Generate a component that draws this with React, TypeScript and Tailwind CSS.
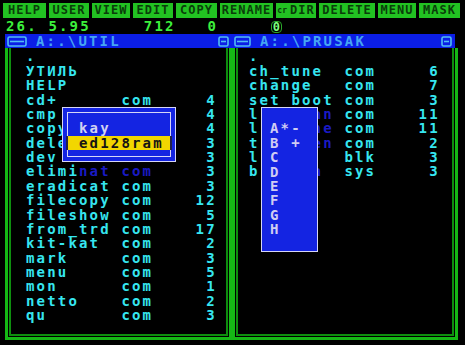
import React from "react";

type Entry = {
  name: string;
  ext?: string;
  size?: string;
  shade?: [number, number];
  hide?: [number, number];
};

// hide = columns that sit fully under a popup, shade = columns under its shadow
const leftFiles: Entry[] = [
  { name: "." },
  { name: "УТИЛЬ" },
  { name: "HELP" },
  { name: "cd+", ext: "com", size: "4" },
  { name: "cmp", ext: "com", size: "4", hide: [4, 14] },
  { name: "copy", ext: "com", size: "4", hide: [4, 14] },
  { name: "delete", ext: "com", size: "3", hide: [4, 14] },
  { name: "dev", ext: "com", size: "3", hide: [4, 14] },
  { name: "eliminat", ext: "com", size: "3", shade: [5, 15] },
  { name: "eradicat", ext: "com", size: "3" },
  { name: "filecopy", ext: "com", size: "12" },
  { name: "fileshow", ext: "com", size: "5" },
  { name: "from_trd", ext: "com", size: "17" },
  { name: "kit-kat", ext: "com", size: "2" },
  { name: "mark", ext: "com", size: "3" },
  { name: "menu", ext: "com", size: "5" },
  { name: "mon", ext: "com", size: "1" },
  { name: "netto", ext: "com", size: "2" },
  { name: "qu", ext: "com", size: "3" },
];

const rightFiles: Entry[] = [
  { name: "." },
  { name: "ch_tune", ext: "com", size: "6" },
  { name: "change", ext: "com", size: "7" },
  { name: "set_boot", ext: "com", size: "3" },
  { name: "lifescan", ext: "com", size: "11", shade: [6, 8], hide: [1, 6] },
  { name: "linetune", ext: "com", size: "11", shade: [6, 8], hide: [1, 6] },
  { name: "t_screen", ext: "com", size: "2", shade: [6, 8], hide: [1, 6] },
  { name: "logo", ext: "blk", size: "3", hide: [1, 6] },
  { name: "basicua", ext: "sys", size: "3", shade: [6, 8], hide: [1, 6] },
];

const buttons = [
  { label: "HELP", w: "w-[43px]" },
  { label: "USER", w: "w-[40px]" },
  { label: "VIEW", w: "w-[38px]" },
  { label: "EDIT", w: "w-[40px]" },
  { label: "COPY", w: "w-[41px]" },
  { label: "RENAME", w: "w-[53px]" },
  { label: "DIR", w: "w-[40px]", small: "cr" },
  { label: "DELETE", w: "w-[56px]" },
  { label: "MENU", w: "w-[38px]" },
  { label: "MASK", w: "w-[41px]" },
];

const drives = ["A*-", "B +", "C", "D", "E", "F", "G", "H"];

const fmt = (e: Entry) =>
  e.ext ? e.name.padEnd(9) + e.ext.padEnd(3) + (e.size ?? "").padStart(6) : e.name;

function FileRow({ entry }: { entry: Entry }) {
  let text = fmt(entry);
  if (entry.hide) {
    const [h1, h2] = entry.hide;
    text = text.slice(0, h1) + " ".repeat(h2 - h1) + text.slice(h2);
  }
  if (!entry.shade) {
    return <div className="h-[14.375px] leading-[14.375px] whitespace-pre">{text}</div>;
  }
  const [a, b] = entry.shade;
  return (
    <div className="h-[14.375px] leading-[14.375px] whitespace-pre">
      {text.slice(0, a)}
      <span className="text-[#1a1ac4]">{text.slice(a, b)}</span>
      {text.slice(b)}
    </div>
  );
}

function BarIcon({ w }: { w: number }) {
  return (
    <svg width={w} height="11" viewBox={`0 0 ${w} 11`}>
      <rect x="1" y="1" width={w - 2} height="9" rx="1.5" fill="none" stroke="#52bdf2" strokeWidth="1.6" />
      <line x1="3" x2={w - 3} y1="5.5" y2="5.5" stroke="#52bdf2" strokeWidth="1.6" />
    </svg>
  );
}

function Panel({
  title,
  files,
  width,
  leftIcon,
  textPad,
  barRight,
}: {
  title: string;
  files: Entry[];
  width: string;
  leftIcon: number;
  textPad: string;
  barRight: string;
}) {
  return (
    <div className={`${width} flex flex-col`}>
      {/* title bar */}
      <div className={`h-[14px] bg-[#0b1ee6] flex items-center pl-[2px] pr-[3px] ${barRight}`}>
        <BarIcon w={leftIcon} />
        <span className="ml-[9px] text-[#46a6f2] leading-[14px] whitespace-pre">{title}</span>
        <span className="ml-auto">
          <BarIcon w={11} />
        </span>
      </div>
      {/* frame */}
      <div className="flex-1 border-l-[3px] border-r-[3px] border-b-[3px] border-[#15b815] pl-[1px] pr-[1px] pb-[1px]">
        <div className={`h-full border-l-2 border-r-2 border-b-2 border-[#0e8f0e] pt-[1.4px] ${textPad} text-[#36e6f0]`}>
          {files.map((f, i) => (
            <FileRow key={i} entry={f} />
          ))}
        </div>
      </div>
    </div>
  );
}

export default function App() {
  return (
    <div className="relative w-[465px] h-[345px] bg-black overflow-hidden font-['DejaVu_Sans_Mono',monospace] font-bold text-[14px] tracking-[2.17px]">
      {/* function keys */}
      <div className="h-[19px] pt-[3px] pl-[3px] flex gap-[3px]">
        {buttons.map((b) => (
          <div
            key={b.label}
            className={`${b.w} h-[15px] bg-[#22c222] text-[#0a3d0a] text-[12px] tracking-[1px] leading-[15px] flex items-center justify-center`}
          >
            {b.small && <span className="text-[8px] tracking-[0px] mr-[3px]">{b.small}</span>}
            {b.label}
          </div>
        ))}
      </div>

      {/* status line */}
      <div className="h-[15px] leading-[15px] pl-[6px] text-[#3cf03c] whitespace-pre flex items-center">
        <span>{"26. 5.95     712   0     "}</span>
        <span className="inline-block w-[11px] h-[12px] leading-[10px] rounded-[4px] border border-[#2aa82a] text-[#7cff7c] text-center tracking-[0px] text-[12px]">
          0
        </span>
      </div>

      {/* panels */}
      <div className="h-[306px] pl-[5px] flex">
        <Panel title={"A:.\\UTIL"} files={leftFiles} width="w-[227px]" leftIcon={20} textPad="pl-[15px]" barRight="" />
        <Panel title={"A:.\\PRUSAK"} files={rightFiles} width="w-[226px]" leftIcon={17} textPad="pl-[11px]" barRight="mr-[3px]" />
      </div>

      {/* file select popup */}
      <div className="absolute left-[62px] top-[107px] w-[114px] h-[55px] bg-[#1424e2] border border-[#d6d6f6] p-[4px]">
        <div className="h-full border border-[#d6d6f6] pt-[8.4px]">
          <div className="h-[14.375px] leading-[14.375px] pl-[11px] text-[#d2d2f2] whitespace-pre">kay</div>
          <div className="-mx-[2px] h-[14.375px] leading-[14.375px] bg-[#f2d600] border-l-2 border-r-2 border-[#23234a] pl-[11px] text-[#141414] whitespace-pre">
            ed128ram
          </div>
        </div>
      </div>

      {/* drive menu */}
      <div className="absolute left-[261px] top-[107px] w-[57px] h-[145px] bg-[#1424e2] border border-[#d6d6f6] pt-[13.4px] pl-[8px] text-[#d0ccf2]">
        {drives.map((d) => (
          <div key={d} className="h-[14.375px] leading-[14.375px] whitespace-pre">
            {d}
          </div>
        ))}
      </div>
    </div>
  );
}
